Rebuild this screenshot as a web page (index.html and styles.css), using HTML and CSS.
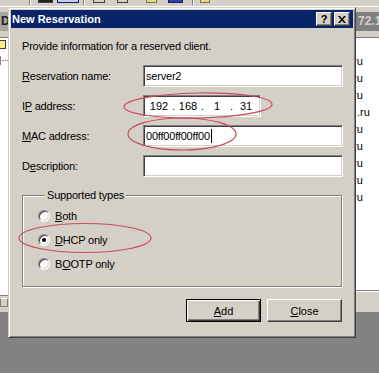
FILE: index.html
```html
<!DOCTYPE html>
<html lang="en">
<head>
  <meta charset="UTF-8">
  <meta name="viewport" content="width=device-width, initial-scale=1.0">
  <title>New Reservation</title>
  <link rel="stylesheet" href="styles.css">
</head>
<body>
  <!-- DHCP console behind the dialog -->
  <div class="console">
    <div class="toolbar">
      <span class="sep s1"></span>
      <span class="tb t1 dark"></span>
      <span class="tb t2 sel"></span>
      <span class="sep s2"></span>
      <span class="tb t3"></span>
      <span class="tb t4"></span>
      <span class="tb t5 yellow"></span>
      <span class="tb t6 blue"></span>
      <span class="sep s3"></span>
      <span class="tb t7 yellow"></span>
    </div>
    <div class="panes">
      <div class="pane tree">
        <div class="caption">D</div>
        <div class="pane-head"></div>
        <div class="pane-body">
          <span class="folder"></span>
          <div class="branch"><span class="plus"></span><span class="dots"></span></div>
        </div>
        <div class="status"><span class="grip"></span></div>
      </div>
      <div class="pane list">
        <div class="caption">72.16.0.1</div>
        <div class="pane-head"></div>
        <div class="pane-body rows">
          <div class="row">.ru</div>
          <div class="row">.ru</div>
          <div class="row">.ru</div>
          <div class="row long">.ru</div>
          <div class="row">.ru</div>
          <div class="row">.ru</div>
          <div class="row">.ru</div>
          <div class="row">.ru</div>
          <div class="row">.ru</div>
        </div>
        <div class="status"></div>
      </div>
    </div>
  </div>

  <div class="dialog">
    <div class="titlebar">
      <span class="title">New Reservation</span>
      <span class="tbtn help">?</span>
      <span class="tbtn close">
        <svg width="8" height="7" viewBox="0 0 8 7"><path d="M0 0h2l2 2.5L6 0h2L5 3.5 8 7H6L4 4.5 2 7H0l3-3.5z" fill="#000"/></svg>
      </span>
    </div>
    <div class="dlg-body">
      <p class="intro">Provide information for a reserved client.</p>
      <div class="fields">
        <label><u>R</u>eservation name:</label>
        <div class="edit">server2</div>
        <label>I<u>P</u> address:</label>
        <div class="edit ip">
          <span>192</span><i>.</i><span>168</span><i>.</i><span>1</span><i>.</i><span>31</span>
        </div>
        <label><u>M</u>AC address:</label>
        <div class="edit">00ff00ff00ff00<span class="caret"></span></div>
        <label>D<u>e</u>scription:</label>
        <div class="edit"></div>
      </div>
      <fieldset class="group">
        <legend>Supported types</legend>
        <div class="radio"><span class="dot"></span><span><u>B</u>oth</span></div>
        <div class="radio"><span class="dot on"></span><span><u>D</u>HCP only</span></div>
        <div class="radio"><span class="dot"></span><span>B<u>O</u>OTP only</span></div>
      </fieldset>
      <div class="buttons">
        <button class="btn default"><u>A</u>dd</button>
        <button class="btn"><u>C</u>lose</button>
      </div>
    </div>
  </div>

  <!-- hand drawn marks -->
  <svg class="marks" width="379" height="373" viewBox="0 0 379 373">
    <ellipse cx="198" cy="105.5" rx="74" ry="12.5" transform="rotate(-1 198 105)"/>
    <ellipse cx="182" cy="134" rx="54" ry="16"/>
    <ellipse cx="85" cy="238" rx="66" ry="14.5"/>
  </svg>
</body>
</html>
```

FILE: styles.css
```css
/* Win2000 style dialog */
body {
  margin: 0;
  width: 379px;
  height: 373px;
  overflow: hidden;
  position: relative;
  background: #848284;
  font-family: "Liberation Sans", Arial, sans-serif;
  font-size: 11px;
  color: #000;
}

/* console behind */
.console {
  display: flex;
  flex-direction: column;
  height: 312px;
}
.toolbar {
  height: 6px;
  background: #d4d0c8;
  border-bottom: 1px solid #fff;
  display: flex;
  align-items: flex-start;
  padding-left: 29px;
}
.sep {
  width: 1px;
  height: 5px;
  border-left: 1px solid #808080;
  background: #fff;
}
.tb {
  height: 2px;
  border: 1px solid #404040;
  border-top: none;
  background: #d4d0c8;
}
.t1 { margin-left: 7px; width: 13px; }
.t2 { margin-left: 4px; width: 20px; }
.s2 { margin-left: 4px; }
.t3 { margin-left: 8px; width: 10px; }
.t4 { margin-left: 12px; width: 9px; }
.t5 { margin-left: 18px; width: 9px; }
.t6 { margin-left: 11px; width: 13px; }
.s3 { margin-left: 9px; }
.t7 { margin-left: 6px; width: 8px; }
.tb.dark { background: #202020; }
.tb.sel { background: #c8c8e8; border-color: #0a246a; }
.tb.yellow { background: #e8d880; border-color: #807040; }
.tb.blue { background: #3040a0; border-color: #0a246a; }

.panes {
  flex: 1;
  display: flex;
  justify-content: space-between;
}
.pane {
  display: flex;
  flex-direction: column;
  min-width: 0;
  overflow: hidden;
  background: #d4d0c8;
}
.tree { width: 8px; }
.list { width: 23px; }
.caption {
  margin-top: 5px;
  height: 19px;
  line-height: 19px;
  font-size: 12px;
  font-weight: bold;
  white-space: nowrap;
}
.tree .caption {
  background: #a8a5a0;
  color: #202020;
  padding-left: 1px;
}
.list .caption {
  background: #808080;
  color: #d4d0c8;
  padding-left: 2px;
}
.pane-head {
  height: 6px;
  border-bottom: 1px solid #808080;
}
.pane-body {
  flex: 1;
  background: #fff;
}
.folder {
  display: block;
  width: 10px;
  height: 7px;
  margin: 2px 0 0 -6px;
  background: #f8f080;
  border: 1px solid #404040;
}
.branch {
  display: flex;
  align-items: center;
  margin: 7px 0 0 -7px;
}
.plus {
  width: 7px;
  height: 7px;
  border: 1px solid #808080;
}
.dots {
  width: 6px;
  margin-left: 1px;
  border-top: 1px dotted #808080;
}
.rows { padding-top: 15px; }
.row {
  white-space: nowrap;
  line-height: 17px;
  margin-left: -6px;
}
.row.long { margin-left: 1px; }
.status { height: 16px; border-top: 1px solid #808080; }
.list .status { height: 21px; box-shadow: inset 0 1px #fff; }
.grip {
  display: block;
  width: 6px;
  height: 7px;
  margin-top: 2px;
  border: 1px solid #808080;
  border-top-color: #fff;
}

/* dialog */
.dialog {
  position: absolute;
  left: 8px;
  top: 7px;
  width: 348px;
  height: 331px;
  box-sizing: border-box;
  padding: 2px;
  background: #d4d0c8;
  border: 1px solid;
  border-color: #d4d0c8 #404040 #404040 #d4d0c8;
  box-shadow: inset 1px 1px #fff, inset -1px -1px #808080;
}
.titlebar {
  height: 18px;
  background: #0a246a;
  display: flex;
  align-items: center;
  padding: 0 3px 0 1px;
}
.title {
  flex: 1;
  color: #fff;
  font-weight: bold;
  font-size: 11px;
}
.tbtn {
  width: 16px;
  height: 14px;
  box-sizing: border-box;
  background: #d4d0c8;
  border: 1px solid;
  border-color: #fff #404040 #404040 #fff;
  box-shadow: inset -1px -1px #808080;
  display: flex;
  align-items: center;
  justify-content: center;
  font-weight: bold;
  font-size: 11px;
}
.help { margin-right: 2px; }

.dlg-body {
  padding: 11px 11px 0;
  letter-spacing: -0.2px;
}
.intro {
  margin: 0;
  line-height: 14px;
}
.fields {
  margin-top: 12px;
  display: grid;
  grid-template-columns: 121px 200px;
  grid-auto-rows: 22px;
  row-gap: 8px;
  align-items: center;
}
.edit {
  height: 22px;
  box-sizing: border-box;
  background: #fff;
  border: 1px solid;
  border-color: #808080 #fff #fff #808080;
  box-shadow: inset 1px 1px #404040, inset -1px -1px #d4d0c8;
  padding-left: 2px;
  display: flex;
  align-items: center;
}
.caret {
  width: 1px;
  height: 14px;
  margin-left: 1px;
  background: #000;
}
.edit.ip {
  width: 118px;
  padding-left: 3px;
  letter-spacing: 0;
}
.ip span {
  width: 24px;
  text-align: center;
}
.ip i {
  width: 5px;
  font-style: normal;
  text-align: center;
}

.group {
  margin: 11px 0 0;
  padding: 2px 0 10px 15px;
  border: 1px solid #808080;
  box-shadow: 1px 1px #fff, inset 1px 1px #fff;
  min-inline-size: auto;
}
.group legend {
  margin-left: 7px;
  padding: 0 2px;
  line-height: 14px;
  background: #d4d0c8;
}
.radio {
  height: 24px;
  display: flex;
  align-items: center;
  gap: 5px;
}
.dot {
  width: 12px;
  height: 12px;
  box-sizing: border-box;
  border-radius: 50%;
  background: #fff;
  border: 1px solid;
  border-color: #808080 #fff #fff #808080;
  box-shadow: inset 1px 1px #404040, inset -1px -1px #d4d0c8;
  display: flex;
  align-items: center;
  justify-content: center;
}
.dot.on::after {
  content: "";
  width: 4px;
  height: 4px;
  border-radius: 50%;
  background: #000;
}

.buttons {
  margin-top: 12px;
  display: flex;
  justify-content: flex-end;
  gap: 6px;
}
.btn {
  width: 75px;
  height: 23px;
  padding: 0;
  font-family: "Liberation Sans", Arial, sans-serif;
  font-size: 11px;
  color: #000;
  background: #d4d0c8;
  border: 1px solid;
  border-color: #fff #404040 #404040 #fff;
  box-shadow: inset -1px -1px #808080;
}
.btn.default {
  border-color: #000;
  box-shadow: inset 1px 1px #fff, inset -1px -1px #404040, inset -2px -2px #808080;
}

.marks {
  position: absolute;
  left: 0;
  top: 0;
  pointer-events: none;
  fill: none;
  stroke: #c84c58;
  stroke-width: 1.2;
}
```
